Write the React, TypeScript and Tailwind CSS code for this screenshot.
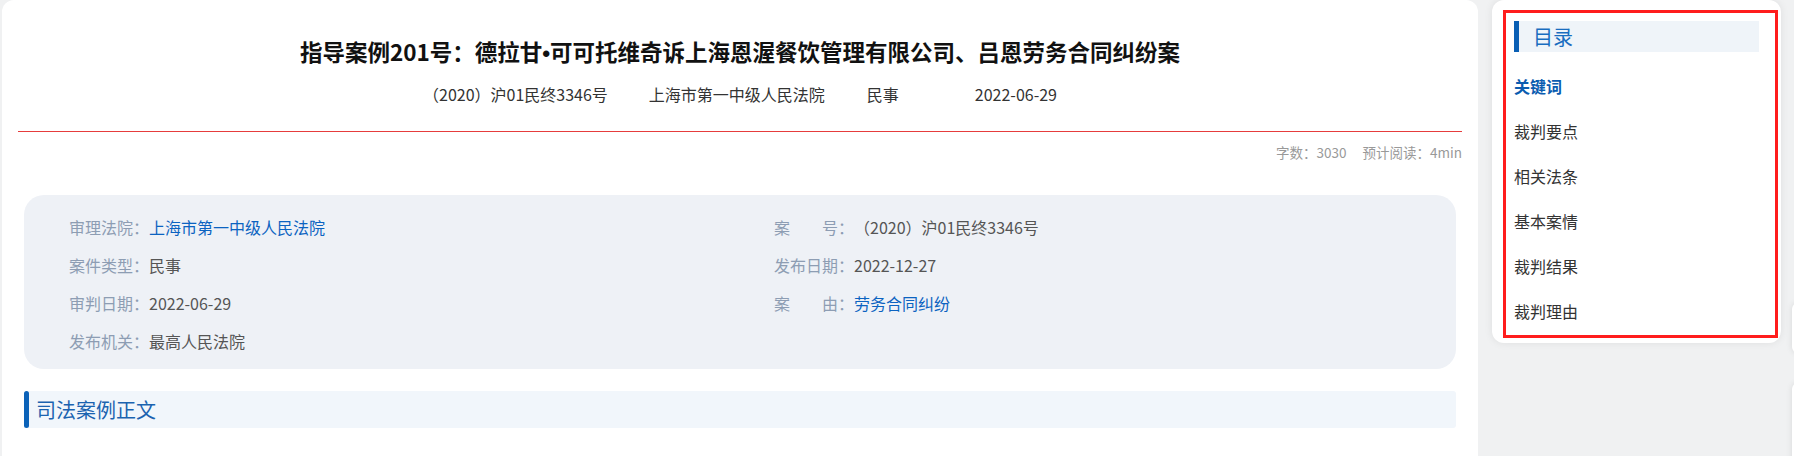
import React from "react";

const infoRows: { label: string; value: string; link?: boolean }[][] = [
  [
    { label: "审理法院：", value: "上海市第一中级人民法院", link: true },
    { label: "案　　号：", value: "（2020）沪01民终3346号" },
  ],
  [
    { label: "案件类型：", value: "民事" },
    { label: "发布日期：", value: "2022-12-27" },
  ],
  [
    { label: "审判日期：", value: "2022-06-29" },
    { label: "案　　由：", value: "劳务合同纠纷", link: true },
  ],
  [{ label: "发布机关：", value: "最高人民法院" }],
];

const toc = ["关键词", "裁判要点", "相关法条", "基本案情", "裁判结果", "裁判理由"];

export default function App() {
  return (
    <div className="relative w-[1794px] h-[456px] overflow-hidden bg-[#f0f1f2] font-['Noto_Sans_CJK_SC','Noto_Sans',sans-serif]">
      <div className="flex items-start gap-[14px] pl-[2px]">
        {/* main card */}
        <div className="w-[1476px] h-[456px] bg-white rounded-t-[12px] px-[16px] pt-[36px]">
          <h1 className="h-[30px] overflow-visible text-center text-[22.5px] font-bold leading-[30px] text-[#111]">
            指导案例201号：德拉甘<span className="leading-[0] font-['Liberation_Sans',sans-serif]">•</span>可可托维奇诉上海恩渥餐饮管理有限公司、吕恩劳务合同纠纷案
          </h1>
          <div className="mt-[17px] flex justify-center text-[16px] leading-[22px] text-[#333]">
            <span>（2020）沪01民终3346号</span>
            <span className="ml-[41px]">上海市第一中级人民法院</span>
            <span className="ml-[42px]">民事</span>
            <span className="ml-[76px]">2022-06-29</span>
          </div>
          <div className="mt-[26px] h-px bg-[#e63c3c]" />
          <div className="mt-[10px] h-[20px] flex justify-end gap-[16px] text-[13.5px] leading-[20px] text-[#999]">
            <span>字数：3030</span>
            <span>预计阅读：4min</span>
          </div>
          <div className="mt-[33px] mx-[6px] rounded-[20px] bg-[#eef1f6] pt-[13px] pb-[9px] pl-[45px] grid grid-cols-[705px_1fr] text-[16px] leading-[38px]">
            {infoRows.map((row, i) => (
              <React.Fragment key={i}>
                {row.map((c, j) => (
                  <div key={j} className="flex">
                    <span className="text-[#8d9db3]">{c.label}</span>
                    <span className={c.link ? "text-[#0b63c1]" : "text-[#555]"}>{c.value}</span>
                  </div>
                ))}
                {row.length === 1 && <div />}
              </React.Fragment>
            ))}
          </div>
          <div className="mt-[22px] mx-[6px] h-[37px] bg-[#f1f6fb] rounded-[3px] flex items-center">
            <div className="w-[5px] h-full rounded-[3px] bg-[#0b62b8]" />
            <span className="ml-[7px] text-[20px] leading-[28px] text-[#1b63b0]">司法案例正文</span>
          </div>
        </div>

        {/* sidebar */}
        <div className="w-[289px] h-[343px] bg-white rounded-[12px] shadow-[0_0_8px_rgba(0,0,0,0.08)] pl-[11px] pr-[3px] pt-[10px]">
          <div className="h-[328px] border-[3px] border-[#ff1d1d] pl-[8px] pt-[8px]">
            <div className="w-[245px] h-[31px] bg-[#eff4f9] flex items-center">
              <div className="w-[5px] h-full bg-[#0a5fb4]" />
              <span className="ml-[14px] text-[20px] leading-[28px] text-[#1a6dc0]">目录</span>
            </div>
            <div className="mt-[12px]">
              {toc.map((t, i) => (
                <div
                  key={t}
                  className={
                    i === 0
                      ? "h-[45px] leading-[45px] text-[16px] font-bold text-[#0a5cb0]"
                      : "h-[45px] leading-[45px] text-[16px] text-[#333]"
                  }
                >
                  {t}
                </div>
              ))}
            </div>
          </div>
        </div>
      </div>

      {/* floating buttons at right edge */}
      <div className="absolute left-[1792px] top-[303px] w-[40px] h-[50px] rounded-[6px] bg-white shadow-[0_0_6px_rgba(0,0,0,0.1)]" />
      <div className="absolute left-[1792px] top-[383px] w-[40px] h-[100px] rounded-[6px] bg-white shadow-[0_0_6px_rgba(0,0,0,0.1)]" />
    </div>
  );
}
